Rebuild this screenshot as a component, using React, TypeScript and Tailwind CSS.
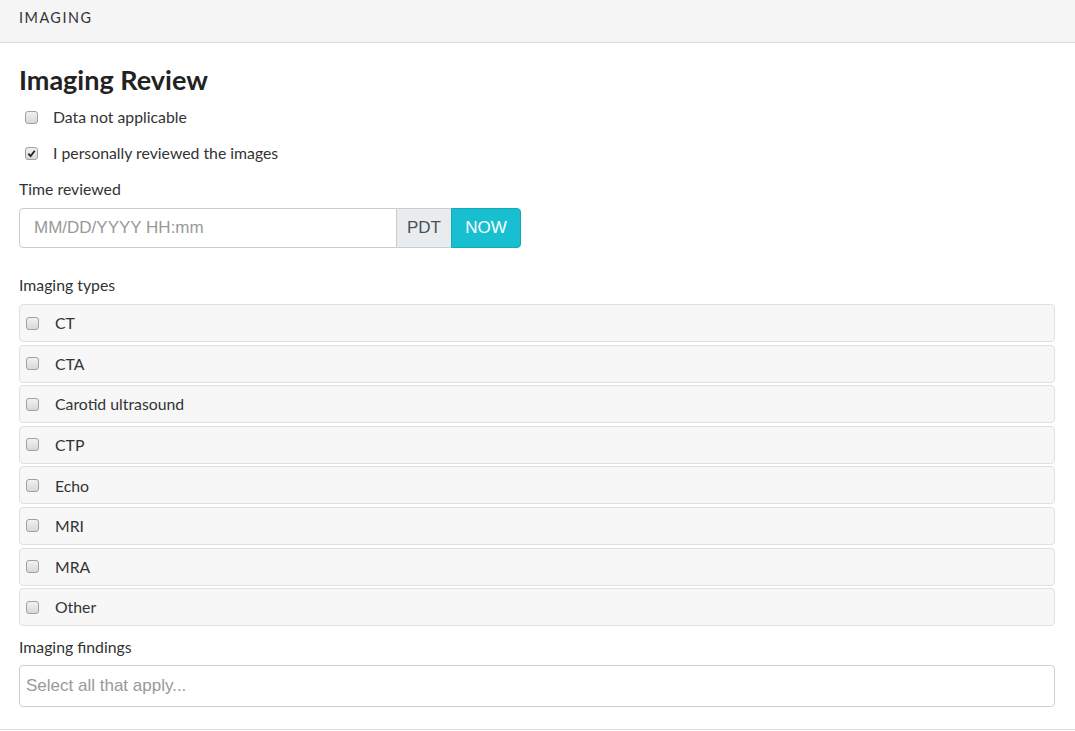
import React from "react";

const types = ["CT", "CTA", "Carotid ultrasound", "CTP", "Echo", "MRI", "MRA", "Other"];

function Box({ checked = false }: { checked?: boolean }) {
  return (
    <span className="flex h-[13px] w-[13px] shrink-0 items-center justify-center rounded-[3px] border border-[#a0a0a0] bg-gradient-to-b from-[#f2f2f2] to-[#d8d8d8]">
      {checked && (
        <svg width="9" height="9" viewBox="0 0 10 10">
          <path d="M1.5 5.2 L4 7.8 L8.6 2" fill="none" stroke="#222" strokeWidth="2" />
        </svg>
      )}
    </span>
  );
}

export default function App() {
  return (
    <div className="min-h-[731px] bg-white text-[#333]" style={{ fontFamily: "Lato, 'Open Sans', sans-serif" }}>
      {/* header */}
      <div className="flex h-[43px] items-center border-b border-[#dcdcdc] bg-[#f5f5f5] px-[19px] pb-[6px]">
        <span className="text-[14.4px] tracking-[1.5px] text-[#333]">IMAGING</span>
      </div>

      <div className="border-b border-[#dcdcdc] pl-[19px] pr-[20px] pb-[22px]">
        <h1 className="mt-[20px] text-[27px] font-bold leading-[34px] text-[#222]">Imaging Review</h1>

        <label className="mt-[8px] flex h-[24px] items-center pl-[6px]">
          <Box />
          <span className="ml-[15px] text-[15.8px]">Data not applicable</span>
        </label>
        <label className="mt-[12px] flex h-[24px] items-center pl-[6px]">
          <Box checked />
          <span className="ml-[15px] text-[15.8px]">I personally reviewed the images</span>
        </label>

        <div className="mt-[14px] text-[15.8px] leading-[20px]">Time reviewed</div>
        <div className="mt-[9px] flex h-[40px] w-[502px]" style={{ fontFamily: "'Liberation Sans', Arial, sans-serif" }}>
          <div className="flex flex-1 items-center rounded-l-[4px] border border-[#ccc] px-[14px] text-[17px] text-[#999]">
            MM/DD/YYYY HH:mm
          </div>
          <div className="flex w-[54px] items-center justify-center border-y border-[#ccc] bg-[#e9ecef] text-[17px] text-[#495057]">
            PDT
          </div>
          <div className="flex w-[70px] items-center justify-center rounded-r-[4px] border border-[#17a8b8] bg-[#17bfd0] text-[17px] text-white">
            NOW
          </div>
        </div>

        <div className="mt-[27px] text-[15.8px] leading-[20px]">Imaging types</div>
        <div className="mt-[9px] flex flex-col gap-[2.6px]">
          {types.map((t) => (
            <label key={t} className="flex h-[38px] items-center rounded-[4px] border border-[#e0e0e0] bg-[#f7f7f7] pl-[6px]">
              <Box />
              <span className="ml-[16px] text-[15.8px]">{t}</span>
            </label>
          ))}
        </div>

        <div className="mt-[11px] text-[15.8px] leading-[20px]">Imaging findings</div>
        <div
          className="mt-[8px] flex h-[42px] items-center rounded-[4px] border border-[#ccd0d6] px-[6px] text-[17px] text-[#999]"
          style={{ fontFamily: "'Liberation Sans', Arial, sans-serif" }}
        >
          Select all that apply...
        </div>
      </div>
    </div>
  );
}
